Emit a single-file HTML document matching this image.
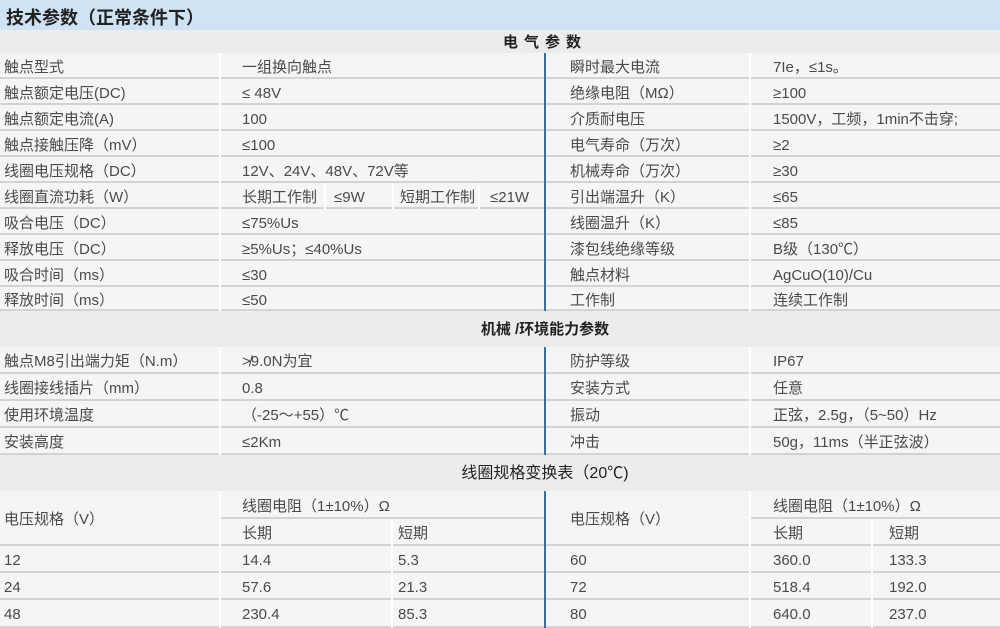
<!DOCTYPE html><html><head><meta charset="utf-8"><style>
body{margin:0;width:1000px;height:628px;position:relative;overflow:hidden;background:#fff;font-family:"Liberation Sans","Noto Sans CJK SC",sans-serif;color:#4a4a4a;font-size:15px}
div{position:absolute;box-sizing:border-box}
.t{left:0;top:0;width:1000px;height:30px;background:#cfe3f4;font-weight:bold;font-size:18px;color:#222;padding:4px 0 0 6px}
.h{left:0;width:1000px;background:#ececec;font-weight:bold;font-size:15px;color:#222;text-align:center}
.c{background:#f5f5f5;border-bottom:2px solid #d3d3d3;white-space:nowrap;padding-left:4px;padding-top:2px}
.b{left:544px;width:2px;background:#2b70b4}
</style></head><body>
<div class="t">技术参数（正常条件下）</div>
<div class="h" style="top:30px;height:23px;line-height:25px;padding-left:90px;letter-spacing:6px">电气参数</div>
<div class="c" style="left:0;top:53px;width:219px;height:26px;line-height:25px">触点型式</div><div class="c" style="left:221px;top:53px;width:323px;height:26px;line-height:25px;padding-left:21px">一组换向触点</div><div class="c" style="left:546px;top:53px;width:203px;height:26px;line-height:25px;padding-left:24px">瞬时最大电流</div><div class="c" style="left:751px;top:53px;width:249px;height:26px;line-height:25px;padding-left:22px">7Ie，≤1s。</div>
<div class="c" style="left:0;top:79px;width:219px;height:26px;line-height:25px">触点额定电压(DC)</div><div class="c" style="left:221px;top:79px;width:323px;height:26px;line-height:25px;padding-left:21px">≤ 48V</div><div class="c" style="left:546px;top:79px;width:203px;height:26px;line-height:25px;padding-left:24px">绝缘电阻（MΩ）</div><div class="c" style="left:751px;top:79px;width:249px;height:26px;line-height:25px;padding-left:22px">≥100</div>
<div class="c" style="left:0;top:105px;width:219px;height:26px;line-height:25px">触点额定电流(A)</div><div class="c" style="left:221px;top:105px;width:323px;height:26px;line-height:25px;padding-left:21px">100</div><div class="c" style="left:546px;top:105px;width:203px;height:26px;line-height:25px;padding-left:24px">介质耐电压</div><div class="c" style="left:751px;top:105px;width:249px;height:26px;line-height:25px;padding-left:22px">1500V，工频，1min不击穿;</div>
<div class="c" style="left:0;top:131px;width:219px;height:26px;line-height:25px">触点接触压降（mV）</div><div class="c" style="left:221px;top:131px;width:323px;height:26px;line-height:25px;padding-left:21px">≤100</div><div class="c" style="left:546px;top:131px;width:203px;height:26px;line-height:25px;padding-left:24px">电气寿命（万次）</div><div class="c" style="left:751px;top:131px;width:249px;height:26px;line-height:25px;padding-left:22px">≥2</div>
<div class="c" style="left:0;top:157px;width:219px;height:26px;line-height:25px">线圈电压规格（DC）</div><div class="c" style="left:221px;top:157px;width:323px;height:26px;line-height:25px;padding-left:21px">12V、24V、48V、72V等</div><div class="c" style="left:546px;top:157px;width:203px;height:26px;line-height:25px;padding-left:24px">机械寿命（万次）</div><div class="c" style="left:751px;top:157px;width:249px;height:26px;line-height:25px;padding-left:22px">≥30</div>
<div class="c" style="left:0;top:183px;width:219px;height:26px;line-height:25px">线圈直流功耗（W）</div>
<div class="c" style="left:221px;top:183px;width:103px;height:26px;line-height:25px;padding-left:21px">长期工作制</div>
<div class="c" style="left:326px;top:183px;width:66px;height:26px;line-height:25px;padding-left:8px">≤9W</div>
<div class="c" style="left:394px;top:183px;width:84px;height:26px;line-height:25px;padding-left:6px">短期工作制</div>
<div class="c" style="left:480px;top:183px;width:64px;height:26px;line-height:25px;padding-left:10px">≤21W</div>
<div class="c" style="left:546px;top:183px;width:203px;height:26px;line-height:25px;padding-left:24px">引出端温升（K）</div><div class="c" style="left:751px;top:183px;width:249px;height:26px;line-height:25px;padding-left:22px">≤65</div>
<div class="c" style="left:0;top:209px;width:219px;height:26px;line-height:25px">吸合电压（DC）</div><div class="c" style="left:221px;top:209px;width:323px;height:26px;line-height:25px;padding-left:21px">≤75%Us</div><div class="c" style="left:546px;top:209px;width:203px;height:26px;line-height:25px;padding-left:24px">线圈温升（K）</div><div class="c" style="left:751px;top:209px;width:249px;height:26px;line-height:25px;padding-left:22px">≤85</div>
<div class="c" style="left:0;top:235px;width:219px;height:26px;line-height:25px">释放电压（DC）</div><div class="c" style="left:221px;top:235px;width:323px;height:26px;line-height:25px;padding-left:21px">≥5%Us；≤40%Us</div><div class="c" style="left:546px;top:235px;width:203px;height:26px;line-height:25px;padding-left:24px">漆包线绝缘等级</div><div class="c" style="left:751px;top:235px;width:249px;height:26px;line-height:25px;padding-left:22px">B级（130℃）</div>
<div class="c" style="left:0;top:261px;width:219px;height:26px;line-height:25px">吸合时间（ms）</div><div class="c" style="left:221px;top:261px;width:323px;height:26px;line-height:25px;padding-left:21px">≤30</div><div class="c" style="left:546px;top:261px;width:203px;height:26px;line-height:25px;padding-left:24px">触点材料</div><div class="c" style="left:751px;top:261px;width:249px;height:26px;line-height:25px;padding-left:22px">AgCuO(10)/Cu</div>
<div class="c" style="left:0;top:287px;width:219px;height:24px;line-height:23px">释放时间（ms）</div><div class="c" style="left:221px;top:287px;width:323px;height:24px;line-height:23px;padding-left:21px">≤50</div><div class="c" style="left:546px;top:287px;width:203px;height:24px;line-height:23px;padding-left:24px">工作制</div><div class="c" style="left:751px;top:287px;width:249px;height:24px;line-height:23px;padding-left:22px">连续工作制</div>
<div class="b" style="top:53px;height:258px"></div>
<div class="h" style="top:311px;height:36px;line-height:38px;padding-left:90px">机械 /环境能力参数</div>
<div class="c" style="left:0;top:347px;width:219px;height:27px;line-height:26px">触点M8引出端力矩（N.m）</div><div class="c" style="left:221px;top:347px;width:323px;height:27px;line-height:26px;padding-left:21px">≯9.0N为宜</div><div class="c" style="left:546px;top:347px;width:203px;height:27px;line-height:26px;padding-left:24px">防护等级</div><div class="c" style="left:751px;top:347px;width:249px;height:27px;line-height:26px;padding-left:22px">IP67</div>
<div class="c" style="left:0;top:374px;width:219px;height:27px;line-height:26px">线圈接线插片（mm）</div><div class="c" style="left:221px;top:374px;width:323px;height:27px;line-height:26px;padding-left:21px">0.8</div><div class="c" style="left:546px;top:374px;width:203px;height:27px;line-height:26px;padding-left:24px">安装方式</div><div class="c" style="left:751px;top:374px;width:249px;height:27px;line-height:26px;padding-left:22px">任意</div>
<div class="c" style="left:0;top:401px;width:219px;height:27px;line-height:26px">使用环境温度</div><div class="c" style="left:221px;top:401px;width:323px;height:27px;line-height:26px;padding-left:21px">（-25～+55）℃</div><div class="c" style="left:546px;top:401px;width:203px;height:27px;line-height:26px;padding-left:24px">振动</div><div class="c" style="left:751px;top:401px;width:249px;height:27px;line-height:26px;padding-left:22px">正弦，2.5g，（5~50）Hz</div>
<div class="c" style="left:0;top:428px;width:219px;height:27px;line-height:26px">安装高度</div><div class="c" style="left:221px;top:428px;width:323px;height:27px;line-height:26px;padding-left:21px">≤2Km</div><div class="c" style="left:546px;top:428px;width:203px;height:27px;line-height:26px;padding-left:24px">冲击</div><div class="c" style="left:751px;top:428px;width:249px;height:27px;line-height:26px;padding-left:22px">50g，11ms（半正弦波）</div>
<div class="b" style="top:347px;height:108px"></div>
<div class="h" style="top:455px;height:36px;line-height:38px;padding-left:90px;font-weight:normal;font-size:16px;color:#222">线圈规格变换表（20℃)</div>
<div class="c" style="left:0;top:491px;width:219px;height:55px;line-height:53px">电压规格（V）</div>
<div class="c" style="left:221px;top:491px;width:323px;height:28px;line-height:27px;padding-left:21px">线圈电阻（1±10%）Ω</div>
<div class="c" style="left:221px;top:519px;width:170px;height:27px;line-height:26px;padding-left:21px">长期</div>
<div class="c" style="left:393px;top:519px;width:151px;height:27px;line-height:26px;padding-left:5px">短期</div>
<div class="c" style="left:546px;top:491px;width:203px;height:55px;line-height:53px;padding-left:24px">电压规格（V）</div>
<div class="c" style="left:751px;top:491px;width:249px;height:28px;line-height:27px;padding-left:22px">线圈电阻（1±10%）Ω</div>
<div class="c" style="left:751px;top:519px;width:120px;height:27px;line-height:26px;padding-left:22px">长期</div>
<div class="c" style="left:873px;top:519px;width:127px;height:27px;line-height:26px;padding-left:16px">短期</div>
<div class="c" style="left:0;top:546px;width:219px;height:27px;line-height:26px">12</div><div class="c" style="left:221px;top:546px;width:170px;height:27px;line-height:26px;padding-left:21px">14.4</div><div class="c" style="left:393px;top:546px;width:151px;height:27px;line-height:26px;padding-left:5px">5.3</div><div class="c" style="left:546px;top:546px;width:203px;height:27px;line-height:26px;padding-left:24px">60</div><div class="c" style="left:751px;top:546px;width:120px;height:27px;line-height:26px;padding-left:22px">360.0</div><div class="c" style="left:873px;top:546px;width:127px;height:27px;line-height:26px;padding-left:16px">133.3</div>
<div class="c" style="left:0;top:573px;width:219px;height:27px;line-height:26px">24</div><div class="c" style="left:221px;top:573px;width:170px;height:27px;line-height:26px;padding-left:21px">57.6</div><div class="c" style="left:393px;top:573px;width:151px;height:27px;line-height:26px;padding-left:5px">21.3</div><div class="c" style="left:546px;top:573px;width:203px;height:27px;line-height:26px;padding-left:24px">72</div><div class="c" style="left:751px;top:573px;width:120px;height:27px;line-height:26px;padding-left:22px">518.4</div><div class="c" style="left:873px;top:573px;width:127px;height:27px;line-height:26px;padding-left:16px">192.0</div>
<div class="c" style="left:0;top:600px;width:219px;height:28px;line-height:26px">48</div><div class="c" style="left:221px;top:600px;width:170px;height:28px;line-height:26px;padding-left:21px">230.4</div><div class="c" style="left:393px;top:600px;width:151px;height:28px;line-height:26px;padding-left:5px">85.3</div><div class="c" style="left:546px;top:600px;width:203px;height:28px;line-height:26px;padding-left:24px">80</div><div class="c" style="left:751px;top:600px;width:120px;height:28px;line-height:26px;padding-left:22px">640.0</div><div class="c" style="left:873px;top:600px;width:127px;height:28px;line-height:26px;padding-left:16px">237.0</div>
<div class="b" style="top:491px;height:137px"></div>
</body></html>
